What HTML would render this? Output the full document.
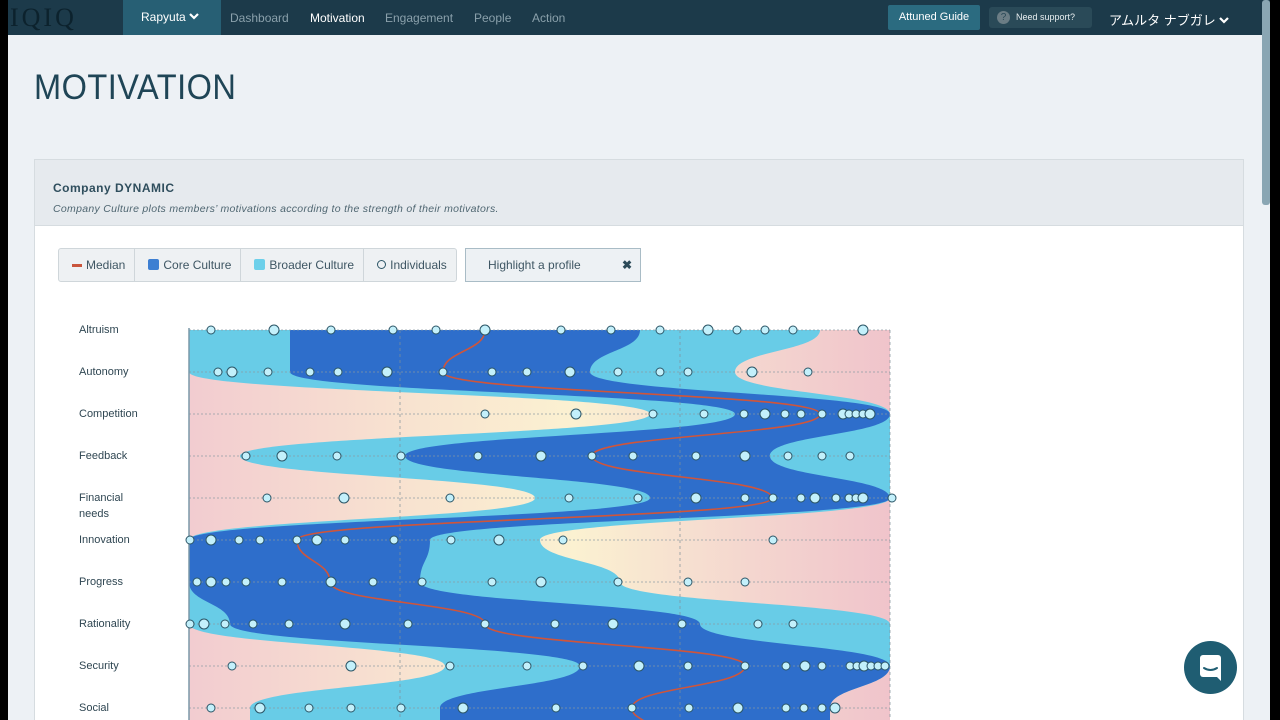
<!DOCTYPE html>
<html><head><meta charset="utf-8"><style>
*{margin:0;padding:0;box-sizing:border-box}
body{width:1280px;height:720px;overflow:hidden;background:#000;font-family:"Liberation Sans","Noto Sans CJK JP",sans-serif;position:relative}
#page{position:absolute;left:8px;top:0;width:1262px;height:720px;background:#edf1f5;overflow:hidden}
#nav{position:absolute;left:0;top:0;width:1262px;height:35px;background:#1c3a4a}
#nav .logo{position:absolute;left:2px;top:3px;font-size:26px;color:#0c222d;letter-spacing:3px;font-family:"Liberation Serif",serif}
#nav .org{position:absolute;left:115px;top:0;width:98px;height:35px;background:#275f74;color:#fff;font-size:12px;line-height:35px;padding-left:18px}
#nav .item{position:absolute;top:11px;font-size:12px;color:#8aa0ab}
#nav .guide{position:absolute;left:880px;top:5px;width:92px;height:25px;background:#2b6b80;color:#fff;font-size:11px;line-height:25px;text-align:center;border-radius:2px}
#nav .sup{position:absolute;left:981px;top:7px;width:103px;height:21px;background:#2a4a58;color:#e8eef0;font-size:9px;line-height:21px;border-radius:3px;padding-left:27px}
#nav .sup i{position:absolute;left:8px;top:4px;width:13px;height:13px;border-radius:50%;background:#6b7d85;color:#2a4a58;font-style:normal;font-size:10px;line-height:13px;text-align:center;padding:0}
#nav .user{position:absolute;left:1101px;top:10px;color:#fff;font-size:13px}
.chev{display:inline-block;vertical-align:1px;margin-left:3px}
.scroll{position:absolute;left:1254px;top:0;width:8px;height:205px;background:#8aa6b3;border-radius:3px}
h1{position:absolute;left:26px;top:68px;font-size:35px;font-weight:normal;color:#1f4556;letter-spacing:.5px;transform:scaleX(.93);transform-origin:left}
#panel{position:absolute;left:26px;top:159px;width:1210px;height:561px;background:#fff;border:1px solid #d6dce0;border-bottom:none;overflow:hidden}
#ph{height:66px;background:#e6eaee;border-bottom:1px solid #d6dce0;padding:19px 18px}
#ph b{font-size:12px;color:#2f4e5d;letter-spacing:.5px}
#ph p{font-size:10.5px;font-style:italic;color:#4f6671;margin-top:6px;letter-spacing:.3px}
.legend{position:absolute;left:23px;top:88px;height:34px;border:1px solid #cfd6da;border-radius:3px;background:#eef1f3;display:flex;font-size:12px;color:#3e5663}
.legend div{padding:0 9px 0 13px;line-height:32px;border-right:1px solid #cfd6da}
.legend div:last-child{border-right:none}
.hl{position:absolute;left:430px;top:88px;width:176px;height:34px;border:1px solid #a9bcc6;background:#edf1f4;font-size:12px;color:#3e5663;line-height:32px;padding-left:22px}
.hl span{position:absolute;right:8px;top:0;font-weight:bold;color:#2c4a58}
.lab{position:absolute;left:44px;font-size:11px;color:#2f4652;line-height:16px}
.ic{position:absolute;left:1176px;top:641px;width:53px;height:53px;border-radius:50%;background:#1f5d72}
</style></head><body>
<div id="page">
<div id="nav">
<div class="logo">IQIQ</div>
<div class="org">Rapyuta<svg class="chev" width="10" height="7"><path d="M1 1 L5 5 L9 1" stroke="#fff" stroke-width="2.2" fill="none"/></svg></div>
<div class="item" style="left:222px">Dashboard</div>
<div class="item" style="left:302px;color:#fff">Motivation</div>
<div class="item" style="left:377px">Engagement</div>
<div class="item" style="left:466px">People</div>
<div class="item" style="left:524px">Action</div>
<div class="guide">Attuned Guide</div>
<div class="sup"><i>?</i>Need support?</div>
<div class="user">アムルタ ナブガレ<svg class="chev" width="10" height="7"><path d="M1 1 L5 5 L9 1" stroke="#fff" stroke-width="2.2" fill="none"/></svg></div>
</div>
<div class="scroll"></div>
<h1>MOTIVATION</h1>
<div id="panel">
<div id="ph"><b>Company DYNAMIC</b><p>Company Culture plots members’ motivations according to the strength of their motivators.</p></div>
<div class="legend">
<div><span style="display:inline-block;width:10px;height:3px;background:#c9553c;vertical-align:middle;margin-right:4px"></span>Median</div>
<div><span style="display:inline-block;width:11px;height:11px;background:#3d7fd2;border-radius:2px;vertical-align:-1px;margin-right:4px"></span>Core Culture</div>
<div><span style="display:inline-block;width:11px;height:11px;background:#6dd0ea;border-radius:2px;vertical-align:-1px;margin-right:4px"></span>Broader Culture</div>
<div><span style="display:inline-block;width:9px;height:9px;border:1px solid #2c5566;border-radius:50%;vertical-align:0;margin-right:4px"></span>Individuals</div>
</div>
<div class="hl">Highlight a profile<span>✖</span></div>
<div class="lab" style="top:162px">Altruism</div>
<div class="lab" style="top:204px">Autonomy</div>
<div class="lab" style="top:246px">Competition</div>
<div class="lab" style="top:288px">Feedback</div>
<div class="lab" style="top:330px">Financial<br>needs</div>
<div class="lab" style="top:372px">Innovation</div>
<div class="lab" style="top:414px">Progress</div>
<div class="lab" style="top:456px">Rationality</div>
<div class="lab" style="top:498px">Security</div>
<div class="lab" style="top:540px">Social</div>
</div>
<svg id="ch" width="1270" height="720" style="position:absolute;left:-8px;top:0"></svg>
<div class="ic"><svg width="53" height="53"><rect x="16" y="14" width="21" height="22" rx="3" fill="#fff"/><path d="M32 35 L37 40 L37 33 Z" fill="#fff"/><path d="M20 27 Q26.5 31 33 27" stroke="#1f5d72" stroke-width="2" fill="none" stroke-linecap="round"/></svg></div>
</div>
<script>
var Y=[330,372,414,456,498,540,582,624,666,708];
function sp(pts){var d="M"+pts[0][0]+" "+pts[0][1];for(var i=1;i<pts.length;i++){var a=pts[i-1],b=pts[i],m=(a[1]+b[1])/2;d+=" C"+a[0]+" "+m+" "+b[0]+" "+m+" "+b[0]+" "+b[1];}return d;}
function band(L,R){var l=L.map(function(x,i){return[x,Y[i]]});l.push([L[9],740]);var r=R.map(function(x,i){return[x,Y[i]]});r.push([R[9],740]);r.reverse();
return sp(l)+" L"+sp(r).substring(1)+" Z";}
var s='<defs><linearGradient id="bg" x1="0" x2="1"><stop offset="0" stop-color="#f2ccd0"/><stop offset=".3" stop-color="#f8e2d0"/><stop offset=".55" stop-color="#fbf1d1"/><stop offset=".8" stop-color="#f4d6cf"/><stop offset="1" stop-color="#f0c4cb"/></linearGradient><clipPath id="cp"><rect x="189" y="330" width="701" height="400"/></clipPath></defs>';
s+='<g clip-path="url(#cp)"><rect x="189" y="330" width="701" height="400" fill="url(#bg)"/>';
s+='<path d="'+band([189,189,650,240,535,189,189,189,445,250],[820,735,890,890,890,540,620,890,890,830])+'" fill="#68cce7"/>';
s+='<path d="'+band([290,290,735,405,650,189,189,230,580,440],[640,590,890,770,890,430,420,700,890,830])+'" fill="#2e6ecb"/>';
s+='</g>';
Y.forEach(function(y){s+='<line x1="189" y1="'+y+'" x2="890" y2="'+y+'" stroke="#8a9aa2" stroke-width="1" stroke-dasharray="2,2" opacity=".7"/>';});
[400,680,890].forEach(function(x){s+='<line x1="'+x+'" y1="330" x2="'+x+'" y2="720" stroke="#7f9099" stroke-dasharray="3,3" opacity=".7"/>';});
s+='<line x1="189" y1="328" x2="189" y2="720" stroke="#7b98a8" stroke-width="1.5"/>';
var med=[[485,330],[443,372],[820,414],[592,456],[772,498],[297,540],[330,582],[485,624],[745,666],[632,708],[650,730]];
s+='<path d="'+sp(med)+'" stroke="#d0553a" stroke-width="1.6" fill="none"/>';
var D=[[211,274,331,393,436,485,561,611,660,708,737,765,793,863],
[218,232,268,310,338,387,443,492,527,570,618,660,688,752,808],
[485,576,653,704,744,765,785,801,822,843,849,856,863,870],
[246,282,337,401,478,541,592,633,696,745,788,822,850],
[267,344,450,569,638,696,745,773,801,815,836,849,856,863,892],
[190,211,239,260,297,317,345,394,451,499,563,773],
[197,211,226,246,282,331,373,422,492,541,618,688,745],
[190,204,225,253,289,345,408,485,555,613,682,758,793],
[232,351,450,527,583,639,688,745,786,805,822,850,857,864,871,878,885],
[211,260,309,351,401,463,556,632,689,738,786,804,822,835]];
D.forEach(function(r,i){r.forEach(function(x,j){var rr=(j%4==1)?5:4;s+='<circle cx="'+x+'" cy="'+Y[i]+'" r="'+rr+'" fill="#c3f0fb" stroke="#2b5566" stroke-width="1"/>';});});
document.getElementById('ch').innerHTML=s;
</script>
</body></html>
